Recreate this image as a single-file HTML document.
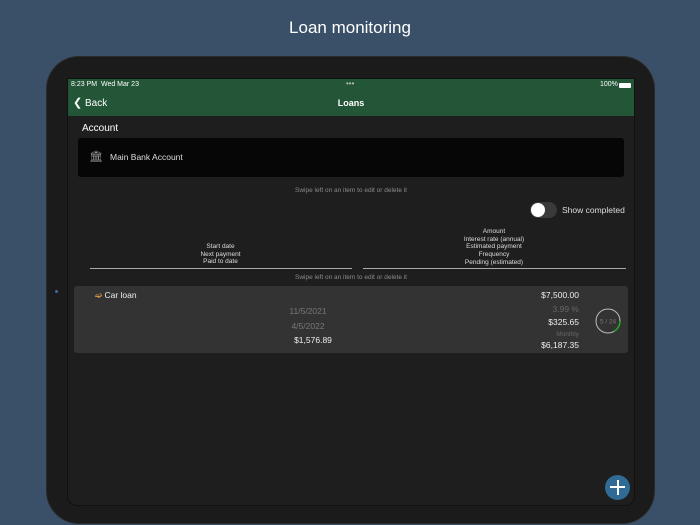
<!DOCTYPE html>
<html><head><style>
body{margin:0;width:700px;height:525px;background:#3a5068;font-family:"Liberation Sans",sans-serif;position:relative;overflow:hidden;color:#fff}
.t{position:absolute;left:0;width:700px;top:18px;text-align:center;font-size:17px;color:#fff}
.dev{position:absolute;left:47px;top:57px;width:607px;height:466px;background:#1b1b1b;border-radius:32px;box-shadow:0 0 0 1px #2a2a2a}
.scr{position:absolute;left:67px;top:78px;width:566px;height:426px;background:#1e1e1e;border-radius:0 0 10px 10px;overflow:hidden;border:1px solid #111}
.hd{position:absolute;left:0;top:0;width:566px;height:37px;background:#235537}
.a{position:absolute;white-space:nowrap}
.s{font-size:6.5px;color:#8a8a8a}
</style></head><body>
<div class="t">Loan monitoring</div>
<div class="dev"></div>
<div class="scr">
 <div class="hd">
  <div class="a" style="left:3px;top:2px;font-size:7px">8:23 PM&nbsp;&nbsp;Wed Mar 23</div>
  <div class="a" style="left:278px;top:0px;font-size:8px;color:#bbb">•••</div>
  <div class="a" style="left:532px;top:2px;font-size:7px">100%</div>
  <div class="a" style="left:551px;top:4px;width:12px;height:5px;background:#fff;border-radius:1px"></div>
  <div class="a" style="left:5px;top:17px;font-size:10px"><span style="font-size:11px">❮</span> Back</div>
  <div class="a" style="left:0;width:566px;text-align:center;top:19px;font-size:9px;font-weight:bold">Loans</div>
 </div>
 <div class="a" style="left:14px;top:44px;font-size:10px">Account</div>
 <div class="a" style="left:10px;top:59px;width:546px;height:39px;background:#060606;border-radius:3px"></div>
 <div class="a" style="left:21px;top:73px;width:11px;height:11px;color:#999;font-size:11px;line-height:11px">🏛</div>
 <div class="a" style="left:42px;top:73px;font-size:8.5px;color:#ddd">Main Bank Account</div>
 <div class="a s" style="left:0;width:566px;text-align:center;top:108px">Swipe left on an item to edit or delete it</div>
 <div class="a" style="left:462px;top:123px;width:27px;height:16px;background:#3a3a3a;border-radius:8px"></div>
 <div class="a" style="left:463px;top:124px;width:14px;height:14px;background:#fff;border-radius:7px"></div>
 <div class="a" style="left:494px;top:126px;font-size:8.5px;color:#ddd">Show completed</div>
 <div class="a" style="left:110px;top:164px;width:85px;text-align:center;font-size:6.5px;line-height:7.7px;color:#ddd">Start date<br>Next payment<br>Paid to date</div>
 <div class="a" style="left:370px;top:149px;width:112px;text-align:center;font-size:6.5px;line-height:7.7px;color:#ddd">Amount<br>Interest rate (annual)<br>Estimated payment<br>Frequency<br>Pending (estimated)</div>
 <div class="a" style="left:22px;top:189px;width:262px;height:1px;background:#aaa"></div>
 <div class="a" style="left:295px;top:189px;width:263px;height:1px;background:#aaa"></div>
 <div class="a s" style="left:0;width:566px;text-align:center;top:195px">Swipe left on an item to edit or delete it</div>
 <div class="a" style="left:6px;top:207px;width:554px;height:67px;background:#333;border-radius:3px"></div>
 <div class="a" style="left:27px;top:211px;font-size:8.5px;color:#eee"><span style="color:#e8a040">➫</span> Car loan</div>
 <div class="a" style="left:200px;top:227px;width:80px;text-align:center;font-size:8.5px;color:#777">11/5/2021</div>
 <div class="a" style="left:200px;top:242px;width:80px;text-align:center;font-size:8.5px;color:#777">4/5/2022</div>
 <div class="a" style="left:205px;top:256px;width:80px;text-align:center;font-size:8.5px;color:#eee">$1,576.89</div>
 <div class="a" style="right:55px;top:211px;text-align:right;font-size:8.5px;color:#eee">$7,500.00</div>
 <div class="a" style="right:55px;top:225px;text-align:right;font-size:8.5px;color:#666">3.99 %</div>
 <div class="a" style="right:55px;top:238px;text-align:right;font-size:8.5px;color:#eee">$325.65</div>
 <div class="a" style="right:55px;top:252px;text-align:right;font-size:6.5px;color:#666">Monthly</div>
 <div class="a" style="right:55px;top:261px;text-align:right;font-size:8.5px;color:#eee">$6,187.35</div>
 <svg class="a" style="left:526px;top:228px" width="28" height="28"><circle cx="14" cy="14" r="12" fill="none" stroke="#bbb" stroke-width="1"/><path d="M26 14 A12 12 0 0 1 20 24.4" fill="none" stroke="#2a2" stroke-width="1.5"/><text x="14" y="16.5" font-size="6.5" fill="#777" text-anchor="middle" font-family="Liberation Sans">5 / 24</text></svg>
</div>
<div class="a" style="left:605px;top:475px;width:25px;height:25px;background:#2f6b94;border-radius:50%"></div>
<div class="a" style="left:610px;top:486px;width:15px;height:2px;background:#fff"></div>
<div class="a" style="left:616.5px;top:480px;width:2px;height:15px;background:#fff"></div>
<div class="a" style="left:55px;top:290px;width:3px;height:3px;background:#3a6a9a;border-radius:50%"></div>
</body></html>
